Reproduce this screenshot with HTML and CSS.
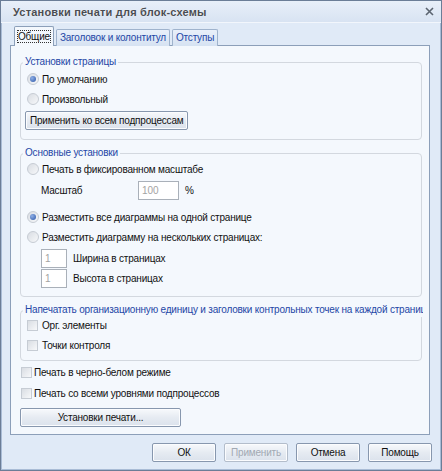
FILE: index.html
```html
<!DOCTYPE html>
<html lang="ru">
<head>
    <meta charset="UTF-8">
    <title>Установки печати для блок-схемы</title>
    <link rel="stylesheet" href="styles.css">
</head>
<body>
    <div class="window">
        <div class="titlebar">
            <span class="title">Установки печати для блок-схемы</span>
            <svg class="close" width="9" height="9" viewBox="0 0 9 9">
                <path d="M1 1 L8 8 M8 1 L1 8" stroke="#5b6470" stroke-width="1.6"/>
            </svg>
        </div>

        <div class="tabs">
            <div class="tab active"><span class="focus">Общие</span></div>
            <div class="tab">Заголовок и колонтитул</div>
            <div class="tab">Отступы</div>
        </div>

        <div class="panel">
            <fieldset class="group g1">
                <legend>Установки страницы</legend>
                <label class="row"><input type="radio" name="page" checked>По умолчанию</label>
                <label class="row"><input type="radio" name="page">Произвольный</label>
                <button class="btn btn-apply-all">Применить ко всем подпроцессам</button>
            </fieldset>

            <fieldset class="group g2">
                <legend>Основные установки</legend>
                <label class="row first"><input type="radio" name="fit">Печать в фиксированном масштабе</label>
                <div class="scale-row">
                    <span class="scale-label">Масштаб</span>
                    <input class="field field-scale" type="text" value="100" disabled>
                    <span class="percent">%</span>
                </div>
                <label class="row one-page"><input type="radio" name="fit" checked>Разместить все диаграммы на одной странице</label>
                <label class="row"><input type="radio" name="fit">Разместить диаграмму на нескольких страницах:</label>
                <div class="size-row">
                    <input class="field field-small" type="text" value="1" disabled>
                    <span>Ширина в страницах</span>
                </div>
                <div class="size-row second">
                    <input class="field field-small" type="text" value="1" disabled>
                    <span>Высота в страницах</span>
                </div>
            </fieldset>

            <fieldset class="group g3">
                <legend>Напечатать организационную единицу и заголовки контрольных точек на каждой странице</legend>
                <label class="row first"><input type="checkbox">Орг. элементы</label>
                <label class="row"><input type="checkbox">Точки контроля</label>
            </fieldset>

            <label class="row loose first"><input type="checkbox">Печать в черно-белом режиме</label>
            <label class="row loose"><input type="checkbox">Печать со всеми уровнями подпроцессов</label>
            <button class="btn btn-print">Установки печати...</button>
        </div>

        <div class="footer">
            <button class="btn btn-dlg">ОК</button>
            <button class="btn btn-dlg" disabled>Применить</button>
            <button class="btn btn-dlg">Отмена</button>
            <button class="btn btn-dlg">Помощь</button>
        </div>
    </div>
</body>
</html>
```

FILE: styles.css
```css
body {
    margin: 0;
    font-family: "Liberation Sans", Arial, sans-serif;
    font-size: 10px;
    letter-spacing: -0.2px;
    color: #111;
    background-color: #dfe9f6;
}

.window {
    width: 442px;
    height: 471px;
    box-sizing: border-box;
    border: 1px solid #6b7d97;
    background-color: #e0eaf7;
    box-shadow: inset 1px 0 0 #a9bcd6, inset -1px 0 0 #a9bcd6, inset 0 -1px 0 #a9bcd6;
}

/* Barra de titulo */
.titlebar {
    height: 21px;
    display: flex;
    align-items: center;
    justify-content: space-between;
    padding: 0 7px 0 12px;
    background: linear-gradient(#e8eff9, #d8e3f2);
    border-bottom: 1px solid #f2f6fc;
}

.title {
    font-weight: bold;
    font-size: 11px;
    letter-spacing: 0.2px;
    color: #4a4d52;
    text-shadow: 0 0 1px #ffffff;
}

.close {
    display: block;
}

/* Pestanas */
.tabs {
    display: flex;
    align-items: flex-end;
    height: 21px;
    margin-top: 2px;
    padding-left: 13px;
    position: relative;
    z-index: 1;
    margin-bottom: -1px;
}

.tab {
    height: 16px;
    line-height: 16px;
    padding: 0 3px;
    margin-right: 2px;
    border: 1px solid #9fb3cd;
    border-bottom: none;
    border-radius: 2px 2px 0 0;
    background: linear-gradient(#e9f0fa, #d6e2f2);
    color: #2447a6;
}

.tab.active {
    height: 19px;
    line-height: 19px;
    background: #f4f8fd;
    color: #111;
    border-color: #8c9fb9;
}

.focus {
    outline: 1px dotted #333;
    outline-offset: 0;
}

/* Panel principal */
.panel {
    height: 390px;
    box-sizing: border-box;
    margin: 0 11px 0 9px;
    border: 1px solid #8c9fb9;
    background-color: #f4f8fd;
    padding-top: 9px;
    display: flex;
    flex-direction: column;
    align-items: flex-start;
}

.group {
    align-self: stretch;
    margin: 0 7px 0 9px;
    padding: 0 6px 0 6px;
    border: 1px solid #d3d8df;
    border-radius: 4px;
    min-width: 0;
}

.group legend {
    margin-left: -4px;
    padding: 0 2px;
    line-height: 14px;
    color: #2447a6;
    white-space: nowrap;
    overflow: hidden;
    max-width: 396px;
}

.g1 {
    padding-bottom: 9px;
}

.g2 {
    margin-top: 6px;
    padding-bottom: 8px;
}

.g3 {
    margin-top: 6px;
    padding-bottom: 5px;
}

.row {
    display: flex;
    align-items: center;
    height: 20px;
    white-space: nowrap;
}

.g2 .row.first {
    height: 18px;
}

.g3 .row.first {
    margin-top: -2px;
}

.row.one-page {
    margin-top: 7px;
}

.row.loose {
    margin-left: 10px;
    height: 21px;
}

.row.loose.first {
    margin-top: 1px;
}

/* Radios y casillas */
input[type="radio"],
input[type="checkbox"] {
    appearance: none;
    margin: 0 3px 0 0;
    width: 12px;
    height: 12px;
    box-sizing: border-box;
    border: 1px solid #c6ccd4;
    background: linear-gradient(135deg, #d9dde3, #f7f8fa);
    flex: none;
}

input[type="radio"] {
    border-radius: 50%;
    position: relative;
}

input[type="radio"]:checked::after {
    content: "";
    position: absolute;
    left: 2px;
    top: 2px;
    width: 6px;
    height: 6px;
    border-radius: 50%;
    background: radial-gradient(circle at 35% 35%, #8fb0e6, #2c56a8);
}

input[type="checkbox"] {
    width: 11px;
    height: 11px;
    margin-right: 4px;
}

.row.loose input[type="checkbox"] {
    margin-right: 2px;
}

/* Campos */
.scale-row {
    display: flex;
    align-items: center;
    height: 20px;
    margin-top: 2px;
    padding-left: 14px;
}

.scale-label {
    width: 97px;
}

.field {
    box-sizing: border-box;
    height: 19px;
    border: 1px solid #a9b0b9;
    background: #fff;
    font-family: inherit;
    font-size: 10px;
    color: #a3a3a3;
    padding: 0 3px;
}

.field-scale {
    width: 41px;
}

.percent {
    margin-left: 6px;
}

.size-row {
    display: flex;
    align-items: center;
    height: 19px;
    margin-top: 2px;
    padding-left: 14px;
}

.size-row.second {
    margin-top: 1px;
}

.field-small {
    width: 26px;
    margin-right: 6px;
}

/* Botones */
.btn {
    box-sizing: border-box;
    height: 19px;
    padding: 0 4px;
    font-family: inherit;
    font-size: 10px;
    letter-spacing: -0.2px;
    white-space: nowrap;
    color: #111;
    border: 1px solid #8797ae;
    border-radius: 2px;
    background: linear-gradient(#f7f9fc, #e6ebf2 50%, #dbe2ec);
    box-shadow: inset 0 0 0 1px #fbfcfe;
}

.btn:disabled {
    color: #a2a9b3;
    border-color: #b3bdcb;
}

.btn-apply-all {
    margin-top: 2px;
    margin-left: -2px;
    width: 163px;
}

.btn-print {
    margin-top: 4px;
    margin-left: 9px;
    width: 161px;
}

.footer {
    display: flex;
    justify-content: flex-end;
    gap: 8px;
    padding: 8px 9px 0 0;
}

.btn-dlg {
    width: 64px;
}
```
